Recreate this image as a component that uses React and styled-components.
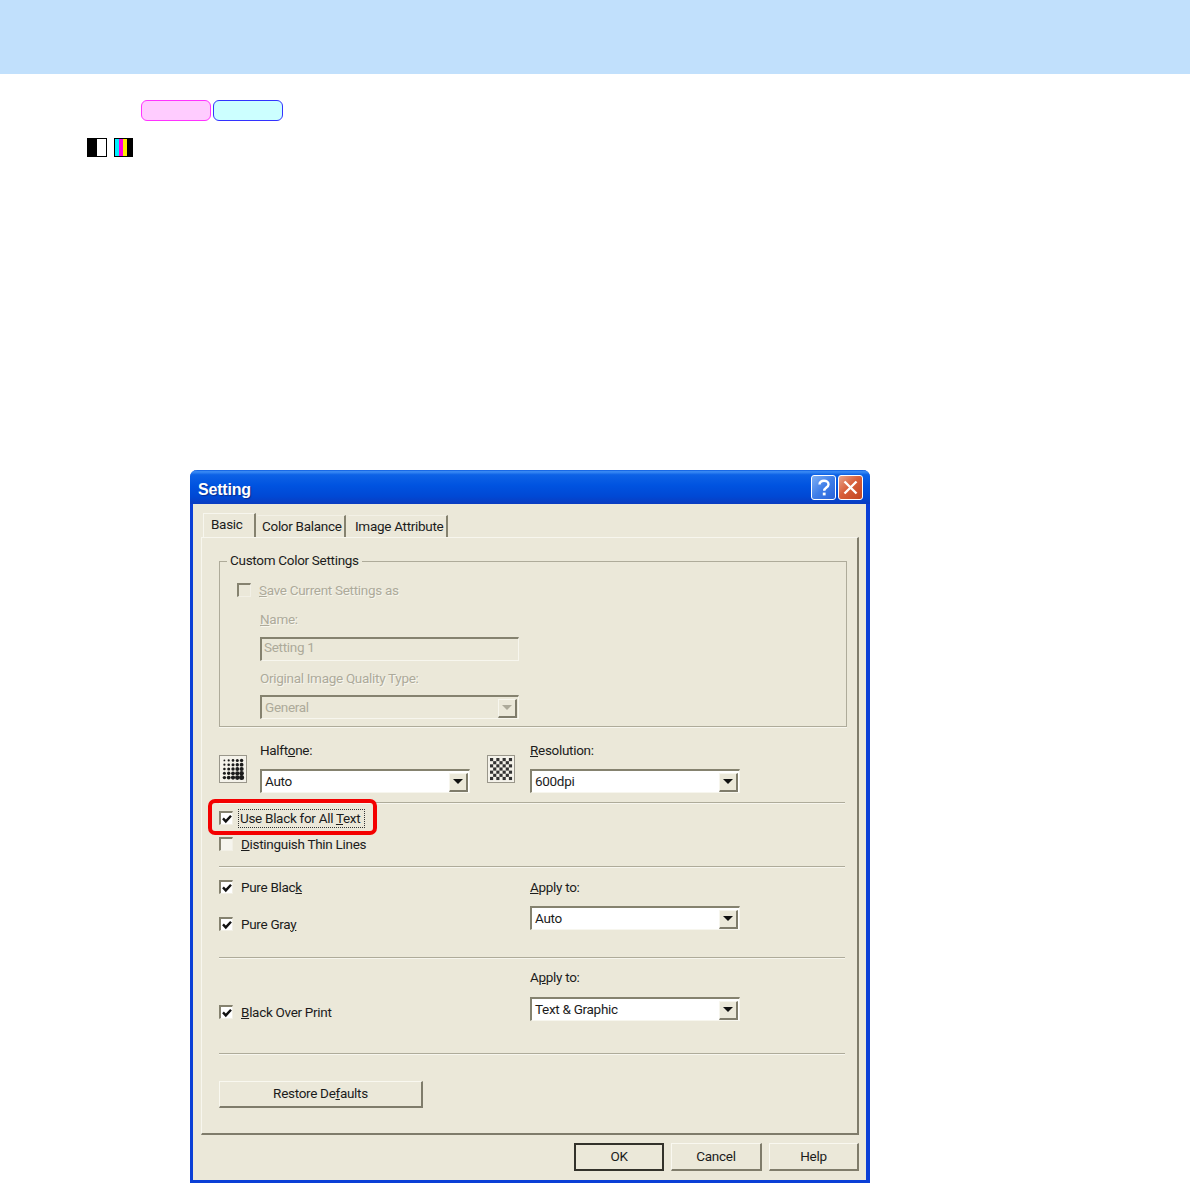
import React from 'react';
import styled, { createGlobalStyle } from 'styled-components';

const GlobalStyle = createGlobalStyle`
  html, body {
    margin: 0;
    padding: 0;
    background: #fff;
    overflow: hidden;
  }
  body {
    font-family: Roboto, "Liberation Sans", Arial, sans-serif;
  }
`;

const Page = styled.div`
  width: 1190px;
  height: 1183px;
  overflow: hidden;
  display: flex;
  flex-direction: column;
`;

const HeaderBand = styled.div`
  height: 74px;
  background: #c1e0fc;
`;

const BadgeRow = styled.div`
  display: flex;
  gap: 2px;
  margin: 26px 0 0 141px;
`;

const Badge = styled.div`
  width: 70px;
  height: 21px;
  box-sizing: border-box;
  border-radius: 6px;
  border: 1px solid ${(p) => (p.$tone === 'pink' ? '#ff33ff' : '#3333ff')};
  background: ${(p) => (p.$tone === 'pink' ? '#ffccff' : '#ccffff')};
`;

const ModeRow = styled.div`
  display: flex;
  gap: 7px;
  margin: 17px 0 0 87px;
  svg { display: block; }
`;

const Dialog = styled.div`
  width: 680px;
  height: 713px;
  box-sizing: border-box;
  margin: 313px 0 0 190px;
  display: flex;
  flex-direction: column;
  background: #ebe8d9;
  border-style: solid;
  border-color: #0a3fd6;
  border-width: 0 4px 3px 3px;
  border-radius: 7px 7px 0 0;
  color: #1c1c1c;
  font-size: 13.5px;
  line-height: 15px;
  letter-spacing: -0.3px;
  white-space: nowrap;
`;

const TitleBar = styled.div`
  height: 34px;
  margin: 0 -4px 0 -3px;
  padding: 0 7px 0 8px;
  display: flex;
  align-items: center;
  justify-content: space-between;
  border-radius: 7px 7px 0 0;
  background: linear-gradient(180deg, #0a5ae0 0%, #3d8df5 5%, #0d62e6 14%, #0053e0 45%, #0048d4 78%, #0a3cc0 100%);
`;

const TitleText = styled.span`
  margin-top: 5px;
  color: #fff;
  font-family: "Liberation Sans", Arial, sans-serif;
  font-size: 16px;
  font-weight: 700;
  letter-spacing: -0.2px;
  text-shadow: 1px 1px 1px #0a2c90;
`;

const TitleButtons = styled.div`
  display: flex;
  gap: 2px;
  margin-top: 1px;
`;

const TitleButton = styled.div`
  width: 25px;
  height: 25px;
  box-sizing: border-box;
  display: flex;
  align-items: center;
  justify-content: center;
  border: 1px solid #fff;
  border-radius: 3px;
  background: ${(p) =>
    p.$close
      ? 'linear-gradient(135deg, #e8a48c 0%, #d8603c 45%, #c24522 100%)'
      : 'linear-gradient(135deg, #7fb0f4 0%, #3f7ee8 50%, #2a62d8 100%)'};
  svg { display: block; }
`;

const TabStrip = styled.div`
  height: 33px;
  box-sizing: border-box;
  padding: 9px 0 0 10px;
  display: flex;
  align-items: flex-end;
`;

const Tab = styled.div`
  box-sizing: border-box;
  width: ${(p) => p.$width}px;
  height: ${(p) => (p.$active ? 24 : 22)}px;
  padding: 3px 0 0 ${(p) => p.$pad}px;
  margin-right: ${(p) => (p.$active ? 1 : 2)}px;
  border-right: 2px solid #85826f;
  border-top: 1px solid ${(p) => (p.$active ? '#f7f6ee' : '#f3f1e6')};
  border-left: 1px solid ${(p) => (p.$active ? '#f7f6ee' : 'transparent')};
`;

const TabPane = styled.div`
  height: 598px;
  box-sizing: border-box;
  margin: 0 7px 0 8px;
  padding: 23px 10px 0 17px;
  border-top: 1px solid #f7f6ee;
  border-left: 1px solid #f7f6ee;
  border-right: 2px solid #7f7c6b;
  border-bottom: 2px solid #7f7c6b;
`;

const GroupBox = styled.fieldset`
  box-sizing: border-box;
  height: 174px;
  margin: -8px 0 0;
  padding: 0 0 0 17px;
  min-width: 0;
  border: 1px solid #aeab9a;
  border-radius: 0;
  box-shadow: 0 1px 0 #f7f6ee;
`;

const GroupTitle = styled.legend`
  margin-left: -10px;
  padding: 0 3px;
  height: 16px;
`;

const CheckRow = styled.div`
  position: relative;
  display: flex;
  align-items: center;
  gap: 8px;
  height: 16px;
  margin-top: ${(p) => p.$top ?? 0}px;
  color: ${(p) => (p.$disabled ? '#adaa9a' : 'inherit')};
  text-shadow: ${(p) => (p.$disabled ? '1px 1px 0 #f7f6ee' : 'none')};
`;

const CheckBox = styled.span`
  box-sizing: border-box;
  width: 14px;
  height: 14px;
  flex: none;
  display: flex;
  align-items: center;
  justify-content: center;
  border-style: solid;
  border-width: 2px 1px 1px 2px;
  border-color: #85826f #f2f0e6 #f2f0e6 #85826f;
  background: ${(p) => (p.$disabled ? '#ebe8d9' : p.$faint ? '#f6f5ee' : '#fff')};
  svg { display: block; }
`;

const FocusLabel = styled.span`
  margin: -2px 0 -2px -3px;
  padding: 1px 0 1px 1px;
  width: 124px;
  border: 1px dotted #333;
`;

const AnnotationBox = styled.div`
  position: absolute;
  left: -11px;
  top: -11px;
  width: 169px;
  height: 36px;
  box-sizing: border-box;
  border: 4px solid #f40000;
  border-radius: 7px;
`;

const FieldLabel = styled.div`
  height: 16px;
  margin: ${(p) => p.$top ?? 0}px 0 ${(p) => p.$bottom ?? 0}px ${(p) => p.$left ?? 0}px;
  color: ${(p) => (p.$disabled ? '#adaa9a' : 'inherit')};
  text-shadow: ${(p) => (p.$disabled ? '1px 1px 0 #f7f6ee' : 'none')};
`;

const TextBox = styled.div`
  box-sizing: border-box;
  width: ${(p) => p.$width}px;
  height: 24px;
  margin-left: ${(p) => p.$left ?? 0}px;
  padding: 1px 0 0 2px;
  border-style: solid;
  border-width: 2px 1px 1px 2px;
  border-color: #85826f #f7f6ee #f7f6ee #85826f;
  color: #adaa9a;
`;

const SelectBox = styled.div`
  box-sizing: border-box;
  width: ${(p) => p.$width}px;
  height: 24px;
  margin-left: ${(p) => p.$left ?? 0}px;
  padding: 1px 2px 2px 3px;
  display: flex;
  align-items: center;
  justify-content: space-between;
  border-style: solid;
  border-width: 2px 1px 1px 2px;
  border-color: #85826f #f7f6ee #f7f6ee #85826f;
  background: ${(p) => (p.$disabled ? 'transparent' : '#fff')};
  color: ${(p) => (p.$disabled ? '#adaa9a' : 'inherit')};
`;

const SelectArrow = styled.span`
  box-sizing: border-box;
  width: 19px;
  height: 19px;
  margin: 0 -1px -2px 0;
  display: flex;
  align-items: center;
  justify-content: center;
  background: #ebe8d9;
  border-style: solid;
  border-width: 1px 2px 2px 1px;
  border-color: #f7f6ee #7f7c6b #7f7c6b #f7f6ee;
  &::after {
    content: '';
    border-style: solid;
    border-width: 5px 5px 0;
    border-color: ${(p) => (p.$disabled ? '#adaa9a' : '#111')} transparent transparent;
  }
`;

const Divider = styled.div`
  height: 2px;
  margin-right: 2px;
  background: #aeab9a;
  border-bottom: 1px solid #f7f6ee;
  box-sizing: border-box;
`;

const ToolRow = styled.div`
  display: grid;
  grid-template-columns: 268px 1fr;
  height: 75px;
  padding-top: 16px;
  box-sizing: border-box;
`;

const ToolField = styled.div`
  display: flex;
  gap: ${(p) => p.$gap}px;
`;

const ToolIcon = styled.div`
  margin-top: 12px;
  svg { display: block; }
`;

const CheckList = styled.div`
  height: 62px;
  padding-top: 6px;
  box-sizing: border-box;
`;

const OptionRow = styled.div`
  display: grid;
  grid-template-columns: 311px 1fr;
  height: ${(p) => p.$height}px;
`;

const Column = styled.div`
  padding-top: ${(p) => p.$top}px;
`;

const PushButton = styled.div`
  box-sizing: border-box;
  width: ${(p) => p.$width}px;
  height: ${(p) => p.$height}px;
  padding-bottom: 1px;
  display: flex;
  align-items: center;
  justify-content: center;
  background: #ebe8d9;
  border-style: solid;
  border-width: 1px 2px 2px 1px;
  border-color: #f9f8f0 #7f7c6b #7f7c6b #f9f8f0;
  ${(p) => p.$primary && `
    border: 2px solid #33322b;
  `}
`;

const RestoreRow = styled.div`
  margin-top: 26px;
`;

const Footer = styled.div`
  display: flex;
  justify-content: flex-end;
  gap: 7px;
  margin: 8px 7px 0 0;
`;

const Check = () => (
  <svg width="10" height="10" viewBox="0 0 10 10">
    <path d="M1 4.4l2.8 3L9 1.8" fill="none" stroke="#111" strokeWidth="2.4" />
  </svg>
);

const HalftoneIcon = () => {
  const cells = [];
  for (let row = 0; row < 5; row++) {
    for (let col = 0; col < 5; col++) {
      cells.push(
        <circle key={`${row}-${col}`} cx={5.4 + col * 4.3} cy={5.4 + row * 4.3} r={0.9 + (row + col) * 0.2} fill="#1b1b1b" />
      );
    }
  }
  return (
    <svg width="28" height="28" viewBox="0 0 28 28">
      <rect x="0.5" y="0.5" width="27" height="27" fill="#f4f2ea" stroke="#99968a" />
      {cells}
    </svg>
  );
};

const CheckerIcon = () => {
  const cells = [];
  for (let row = 0; row < 7; row++) {
    for (let col = 0; col < 7; col++) {
      if ((row + col) % 2 === 0) {
        cells.push(<rect key={`${row}-${col}`} x={3 + col * 3.15} y={3 + row * 3.15} width="3.15" height="3.15" fill="#333" />);
      }
    }
  }
  return (
    <svg width="28" height="28" viewBox="0 0 28 28">
      <rect x="0.5" y="0.5" width="27" height="27" fill="#f4f2ea" stroke="#99968a" />
      {cells}
    </svg>
  );
};

const Select = ({ width, left, disabled, children }) => (
  <SelectBox $width={width} $left={left} $disabled={disabled}>
    <span>{children}</span>
    <SelectArrow $disabled={disabled} />
  </SelectBox>
);

const App = () => (
  <Page>
    <GlobalStyle />
    <HeaderBand />
    <BadgeRow>
      <Badge $tone="pink" />
      <Badge $tone="blue" />
    </BadgeRow>
    <ModeRow>
      <svg width="20" height="19" viewBox="0 0 20 19">
        <rect width="20" height="19" fill="#000" />
        <rect x="10" y="1" width="9" height="17" fill="#fff" />
      </svg>
      <svg width="19" height="19" viewBox="0 0 19 19">
        <rect width="19" height="19" fill="#000" />
        <rect x="1" y="1" width="4" height="17" fill="#00f0ff" />
        <rect x="5" y="1" width="4" height="17" fill="#ff00e0" />
        <rect x="9" y="1" width="4" height="17" fill="#ffee00" />
      </svg>
    </ModeRow>

    <Dialog>
      <TitleBar>
        <TitleText>Setting</TitleText>
        <TitleButtons>
          <TitleButton>
            <svg width="14" height="18" viewBox="0 0 14 18">
              <path d="M2.5 5.5C2.5 3 4.5 1.8 7 1.8s4.5 1.4 4.5 3.6c0 3-4.3 3.2-4.3 6.4" fill="none" stroke="#fff" strokeWidth="2.4" />
              <rect x="5.8" y="13.6" width="2.8" height="2.8" fill="#fff" />
            </svg>
          </TitleButton>
          <TitleButton $close>
            <svg width="15" height="15" viewBox="0 0 15 15">
              <path d="M1.5 1.5l12 12M13.5 1.5l-12 12" stroke="#fff" strokeWidth="2.4" />
            </svg>
          </TitleButton>
        </TitleButtons>
      </TitleBar>

      <TabStrip>
        <Tab $active $width={53} $pad={7}>Basic</Tab>
        <Tab $width={89} $pad={4}>Color Balance</Tab>
        <Tab $width={100} $pad={6}>Image Attribute</Tab>
      </TabStrip>

      <TabPane>
        <GroupBox>
          <GroupTitle>Custom Color Settings</GroupTitle>
          <CheckRow $disabled $top={13}>
            <CheckBox $disabled />
            <span><u>S</u>ave Current Settings as</span>
          </CheckRow>
          <FieldLabel $disabled $left={23} $top={14} $bottom={9}><u>N</u>ame:</FieldLabel>
          <TextBox $width={259} $left={23}>Setting 1</TextBox>
          <FieldLabel $disabled $left={23} $top={10} $bottom={8}>Original Image Quality Type:</FieldLabel>
          <Select width={259} left={23} disabled>General</Select>
        </GroupBox>

        <ToolRow>
          <ToolField $gap={13}>
            <ToolIcon><HalftoneIcon /></ToolIcon>
            <div>
              <FieldLabel $bottom={10}>Halft<u>o</u>ne:</FieldLabel>
              <Select width={210}>Auto</Select>
            </div>
          </ToolField>
          <ToolField $gap={15}>
            <ToolIcon><CheckerIcon /></ToolIcon>
            <div>
              <FieldLabel $bottom={10}><u>R</u>esolution:</FieldLabel>
              <Select width={210}>600dpi</Select>
            </div>
          </ToolField>
        </ToolRow>
        <Divider />

        <CheckList>
          <CheckRow>
            <CheckBox><Check /></CheckBox>
            <FocusLabel>Use Black for All <u>T</u>ext</FocusLabel>
            <AnnotationBox />
          </CheckRow>
          <CheckRow $top={10}>
            <CheckBox $faint />
            <span><u>D</u>istinguish Thin Lines</span>
          </CheckRow>
        </CheckList>
        <Divider />

        <OptionRow $height={89}>
          <Column $top={11}>
            <CheckRow>
              <CheckBox><Check /></CheckBox>
              <span>Pure Blac<u>k</u></span>
            </CheckRow>
            <CheckRow $top={21}>
              <CheckBox><Check /></CheckBox>
              <span>Pure Gra<u>y</u></span>
            </CheckRow>
          </Column>
          <Column $top={12}>
            <FieldLabel $bottom={10}><u>A</u>pply to:</FieldLabel>
            <Select width={210}>Auto</Select>
          </Column>
        </OptionRow>
        <Divider />

        <OptionRow $height={94}>
          <Column $top={45}>
            <CheckRow>
              <CheckBox><Check /></CheckBox>
              <span><u>B</u>lack Over Print</span>
            </CheckRow>
          </Column>
          <Column $top={11}>
            <FieldLabel $bottom={11}>A<u>p</u>ply to:</FieldLabel>
            <Select width={210}>Text &amp; Graphic</Select>
          </Column>
        </OptionRow>
        <Divider />

        <RestoreRow>
          <PushButton $width={204} $height={27}>Restore De<u>f</u>aults</PushButton>
        </RestoreRow>
      </TabPane>

      <Footer>
        <PushButton $primary $width={90} $height={28}>OK</PushButton>
        <PushButton $width={91} $height={28}>Cancel</PushButton>
        <PushButton $width={90} $height={28}>Help</PushButton>
      </Footer>
    </Dialog>
  </Page>
);

export default App;
